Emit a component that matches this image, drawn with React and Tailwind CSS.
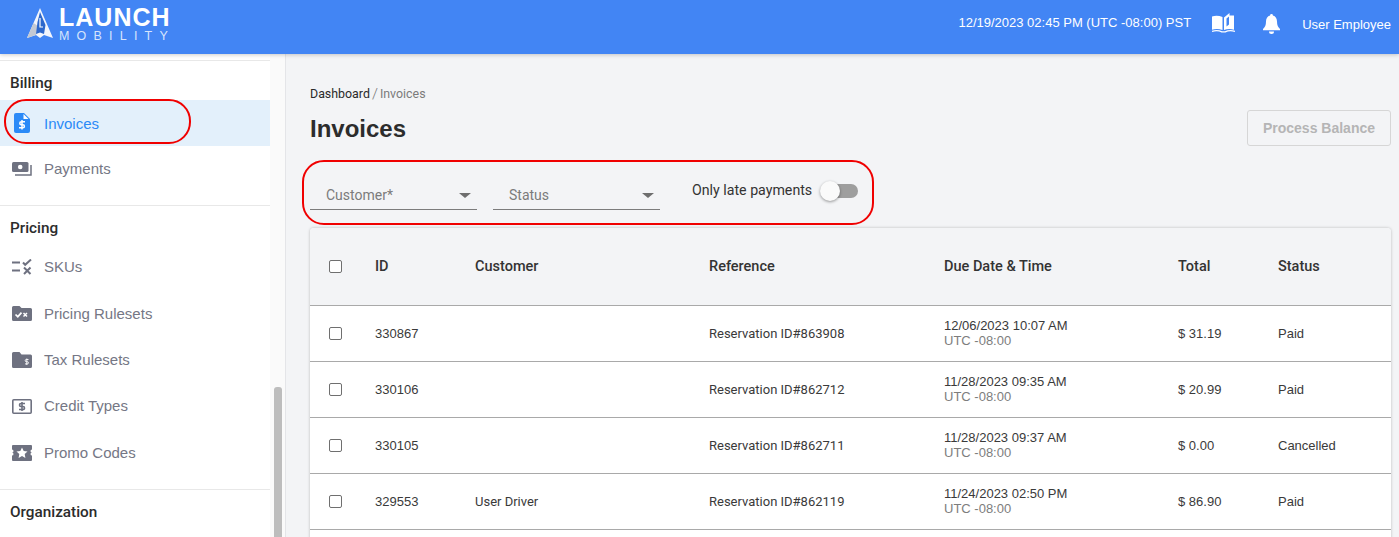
import { useState } from "react";

const rows = [
  { id: "330867", customer: "", reference: "Reservation ID#863908", due: "12/06/2023 10:07 AM", total: "$ 31.19", status: "Paid" },
  { id: "330106", customer: "", reference: "Reservation ID#862712", due: "11/28/2023 09:35 AM", total: "$ 20.99", status: "Paid" },
  { id: "330105", customer: "", reference: "Reservation ID#862711", due: "11/28/2023 09:37 AM", total: "$ 0.00", status: "Cancelled" },
  { id: "329553", customer: "User Driver", reference: "Reservation ID#862119", due: "11/24/2023 02:50 PM", total: "$ 86.90", status: "Paid" },
];

const InvoiceIcon = () => (
  <svg width="16" height="20" viewBox="0 0 16 20">
    <path d="M2 0h8l6 6v12a2 2 0 0 1-2 2H2a2 2 0 0 1-2-2V2a2 2 0 0 1 2-2z" fill="#2b8af7" />
    <path d="M9.5 1v5h5z" fill="#fff" />
    <path d="M11 8.800H7.300a1.500 1.500 0 0 0 0 3h1.600a1.500 1.500 0 0 1 0 3H5M8 7v9.500" fill="none" stroke="#fff" strokeWidth="1.500" />
  </svg>
);

const PaymentsIcon = () => (
  <svg width="20" height="14" viewBox="0 0 20 14">
    <rect x="0" y="0" width="16.500" height="10" rx="1.500" fill="#6e7180" />
    <circle cx="8.200" cy="5" r="2.300" fill="#fff" />
    <path d="M19 3v10H3" fill="none" stroke="#6e7180" strokeWidth="1.500" />
  </svg>
);

const SkuIcon = () => (
  <svg width="20" height="16" viewBox="0 0 20 16" fill="none" stroke="#6e7180" strokeWidth="2">
    <path d="M0 3.500h8M0 11.500h8" />
    <path d="M11 3.500l2.200 2.300L19 0.500" />
    <path d="M12 8.500l6.500 6.500M18.500 8.500L12 15" />
  </svg>
);

const RulesetIcon = () => (
  <svg width="20" height="15" viewBox="0 0 20 15">
    <path d="M1.500 0h6l2 2h9A1.500 1.500 0 0 1 20 3.500v10a1.500 1.500 0 0 1-1.500 1.500h-17A1.500 1.500 0 0 1 0 13.500v-12A1.500 1.500 0 0 1 1.500 0z" fill="#6e7180" />
    <path d="M3.500 8.500l2.300 2.200 3.700-4" fill="none" stroke="#fff" strokeWidth="1.700" />
    <path d="M11.500 7l3.500 3.500M15 7l-3.500 3.500" fill="none" stroke="#fff" strokeWidth="1.500" />
  </svg>
);

const TaxIcon = () => (
  <svg width="20" height="16" viewBox="0 0 20 16">
    <path d="M1.500 0h6l2 2.500h9A1.500 1.500 0 0 1 20 4v10.500a1.500 1.500 0 0 1-1.500 1.500h-17A1.500 1.500 0 0 1 0 14.500v-13A1.500 1.500 0 0 1 1.500 0z" fill="#6e7180" />
    <path d="M16.500 7.500h-2.200a1 1 0 0 0 0 2.200h1a1 1 0 0 1 0 2.200H13M14.800 6.500v6.500" fill="none" stroke="#fff" strokeWidth="0.900" />
  </svg>
);

const CreditIcon = () => (
  <svg width="20" height="15" viewBox="0 0 20 15">
    <rect x="0.800" y="0.800" width="18.400" height="13.400" rx="1" fill="none" stroke="#6e7180" strokeWidth="1.600" />
    <path d="M13 4.500H9a1.400 1.400 0 0 0 0 3h2a1.400 1.400 0 0 1 0 3H7M10 3v9" fill="none" stroke="#6e7180" strokeWidth="1.600" />
  </svg>
);

const PromoIcon = () => (
  <svg width="20" height="16" viewBox="0 0 20 16">
    <path d="M1 0h18a1 1 0 0 1 1 1v3.500a1.500 1.500 0 0 0 0 3 1.500 1.500 0 0 0 0 3V15a1 1 0 0 1-1 1H1a1 1 0 0 1-1-1v-4.500a1.500 1.500 0 0 0 0-3 1.500 1.500 0 0 0 0-3V1a1 1 0 0 1 1-1z" fill="#6e7180" />
    <path d="M10 2.500l1.700 3.500 3.800.5-2.800 2.600.7 3.800-3.400-1.900-3.400 1.900.7-3.800-2.800-2.600 3.800-.5z" fill="#fff" />
  </svg>
);

const BookIcon = () => (
  <svg width="23" height="20" viewBox="0 0 23 20">
    <path d="M0 3.500C3 2.500 7 2.500 10.500 4v13C7 15.800 3 15.800 0 16.800z" fill="#fff" />
    <path d="M12 4.500L17.500 0v2.600H22v14.200c-3.500-1-6.800-.9-10 .2z" fill="#fff" />
    <path d="M14.500 13.500V5.500L17 3.500v8z" fill="#4285f4" />
    <path d="M0 18.300c3.500-.9 7-.8 9.800.5h3.400c2.800-1.300 6.300-1.400 9.800-.5" fill="none" stroke="#fff" strokeWidth="1.300" />
  </svg>
);

const BellIcon = () => (
  <svg width="17" height="20" viewBox="0 0 17 20">
    <path d="M8.500 0a1.400 1.400 0 0 1 1.400 1.500C12.700 2.200 14 4.600 14 7.500c0 4 1 5.500 3 7.500v1.200H0V15c2-2 3-3.500 3-7.500 0-2.900 1.300-5.300 4.100-6A1.400 1.400 0 0 1 8.500 0z" fill="#fff" />
    <path d="M6 17.500h5a2.500 2.500 0 0 1-5 0z" fill="#fff" />
  </svg>
);

const Logo = () => (
  <div className="flex items-start">
    <svg width="26" height="30" viewBox="0 0 26 30" className="ml-[27px] mt-[8px]">
      <path d="M13 0L0 30l9-3 4 3 4-3 9 3z" fill="#f2f5fc" />
      <path d="M6.500 15L0 30l9-3 2-9z" fill="#c3c9d4" />
      <path d="M13 4l5.500 13-1.500 9-4-1.500L9 26l1.500-12z" fill="#2d68cc" />
      <path d="M13 10v9h3" fill="none" stroke="#fff" strokeWidth="1.200" />
    </svg>
    <div className="ml-[6px] mt-[4px] flex flex-col font-['Liberation_Sans',sans-serif] text-white">
      <span className="text-[25px] font-bold leading-[26px] tracking-[1px]">LAUNCH</span>
      <span className="-mt-[1px] text-[12.5px] leading-[14px] tracking-[7.200px] text-[#d6e4fc]">MOBILITY</span>
    </div>
  </div>
);

function SideItem({ icon, label, active, className }) {
  return (
    <div
      className={`flex h-[46.4px] items-center ${active ? "bg-[#e3f0fb] text-[#2b8af7]" : "text-[#757785]"} ${className || ""}`}
    >
      <span className="flex w-[44px] justify-center">{icon}</span>
      <span className={`text-[15px] ${active ? "pt-[3px]" : "pt-[1px]"}`}>{label}</span>
    </div>
  );
}

function Checkbox() {
  return <span className="block size-[13px] rounded-[2px] border border-[#6f6f6f] bg-white" />;
}

const gridCols = "grid grid-cols-[65px_100px_234px_235px_234px_100px_1fr] items-center";

export default function App() {
  const [late, setLate] = useState(false);

  return (
    <div className="flex h-[537px] w-full flex-col overflow-hidden bg-[#f3f4f6] font-['Liberation_Sans',sans-serif]">
      <header className="relative z-10 flex h-[54px] shrink-0 items-start justify-between bg-[#4285f4] shadow-[0_1px_4px_rgba(0,0,0,0.2)]">
        <Logo />
        <div className="flex items-start pr-[8px] text-white">
          <span className="mt-[13px] text-[13px] leading-[20px]">12/19/2023 02:45 PM (UTC -08:00) PST</span>
          <span className="ml-[21px] mt-[13px]"><BookIcon /></span>
          <span className="ml-[28px] mt-[14px]"><BellIcon /></span>
          <span className="ml-[22px] mt-[15px] text-[13px] leading-[20px]">User Employee</span>
        </div>
      </header>

      <div className="flex min-h-0 flex-1">
        <aside className="flex w-[286px] shrink-0 border-r border-[#e4e5e8] bg-[#fafafa]">
          <nav className="w-[270px] shrink-0 bg-white pt-[6px]">
            <div className="border-t border-[#e8e8e8] pt-[11px]">
              <h3 className="h-[28px] pl-[10px] font-['Roboto',sans-serif] text-[15.300px] font-medium leading-[22px] text-[#2c2c2c]">Billing</h3>
              <SideItem icon={<InvoiceIcon />} label="Invoices" active />
              <SideItem icon={<PaymentsIcon />} label="Payments" className="-mt-[1px]" />
            </div>
            <div className="mt-[13px] border-t border-[#e8e8e8] pt-[11px]">
              <h3 className="h-[16px] pl-[10px] font-['Roboto',sans-serif] text-[15.300px] font-medium leading-[22px] text-[#2c2c2c]">Pricing</h3>
              <SideItem icon={<SkuIcon />} label="SKUs" className="mt-[11px]" />
              <SideItem icon={<RulesetIcon />} label="Pricing Rulesets" />
              <SideItem icon={<TaxIcon />} label="Tax Rulesets" />
              <SideItem icon={<CreditIcon />} label="Credit Types" />
              <SideItem icon={<PromoIcon />} label="Promo Codes" />
            </div>
            <div className="mt-[13px] border-t border-[#e8e8e8] pt-[11px]">
              <h3 className="pl-[10px] font-['Roboto',sans-serif] text-[15.300px] font-medium leading-[22px] text-[#2c2c2c]">Organization</h3>
            </div>
          </nav>
          <div className="flex-1 pl-[4px] pr-[3px] pt-[333px]">
            <div className="h-[200px] rounded-[3px] bg-[#bdbdbd]" />
          </div>
        </aside>

        <main className="min-w-0 flex-1 overflow-hidden pl-[24px] pr-[8px] pt-[32px]">
          <div className="flex h-[16px] items-center font-['Roboto',sans-serif] text-[12.400px] leading-[16px]">
            <span className="text-[#2a2a2a]">Dashboard</span>
            <span className="mx-[2px] text-[15px] font-light text-[#777]">/</span>
            <span className="text-[#7b7b7b]">Invoices</span>
          </div>
          <div className="flex items-start justify-between">
            <h1 className="mt-[11px] text-[24px] font-bold leading-[32px] text-[#2c2c2c]">Invoices</h1>
            <button className="mt-[8px] h-[36px] w-[144px] rounded-[3px] border border-[#d6d6d6] text-[14px] font-bold text-[#b5b5b5]" disabled>
              Process Balance
            </button>
          </div>

          <div className="mt-[25px] flex items-start font-['Roboto',sans-serif]">
            <div className="flex h-[39px] w-[167px] items-center justify-between border-b border-[#7c7c7c] pl-[16px] pr-[6px] pt-[10px]">
              <span className="text-[14px] text-[#7b7b7b]">Customer*</span>
              <span className="h-0 w-0 border-x-[6px] border-t-[5px] border-x-transparent border-t-[#6e6e6e]" />
            </div>
            <div className="ml-[16px] flex h-[39px] w-[167px] items-center justify-between border-b border-[#7c7c7c] pl-[16px] pr-[6px] pt-[10px]">
              <span className="text-[14px] text-[#7b7b7b]">Status</span>
              <span className="h-0 w-0 border-x-[6px] border-t-[5px] border-x-transparent border-t-[#6e6e6e]" />
            </div>
            <div className="ml-[32px] flex items-center pt-[9px]">
              <span className="text-[14.200px] leading-[20px] text-[#333]">Only late payments</span>
              <button
                className="relative ml-[10px] mt-[1px] h-[14px] w-[36px] rounded-full bg-[#9e9e9e]"
                onClick={() => setLate(!late)}
              >
                <span className="absolute -left-[2px] -top-[3px] size-[20px] rounded-full bg-[#fafafa] shadow-[0_1px_3px_rgba(0,0,0,0.4)]" />
              </button>
            </div>
          </div>

          <div className="mt-[18px] rounded-t-[4px] bg-white shadow-[0_0_3px_rgba(0,0,0,0.25)]">
            <div className={`${gridCols} h-[78px] rounded-t-[4px] border-b border-[#a9a9a9] bg-[#f3f4f6] font-['Roboto',sans-serif] text-[14.500px] font-medium text-[#333]`}>
              <span className="pl-[19px]"><Checkbox /></span>
              <span>ID</span>
              <span>Customer</span>
              <span>Reference</span>
              <span>Due Date &amp; Time</span>
              <span>Total</span>
              <span>Status</span>
            </div>
            {rows.map((row) => (
              <div key={row.id} className={`${gridCols} h-[56px] border-b border-[#a9a9a9] text-[13px] text-[#3a3a3a]`}>
                <span className="pl-[19px]"><Checkbox /></span>
                <span>{row.id}</span>
                <span className="font-['Roboto',sans-serif]">{row.customer}</span>
                <span className="font-['Roboto',sans-serif]">{row.reference}</span>
                <span className="pb-[2px] leading-[15px]">
                  <span className="block">{row.due}</span>
                  <span className="block text-[#7d7d7d]">UTC -08:00</span>
                </span>
                <span>{row.total}</span>
                <span>{row.status}</span>
              </div>
            ))}
            <div className="h-[56px]" />
          </div>
        </main>
      </div>

      <div className="pointer-events-none absolute left-[4px] top-[99px] z-20 h-[45px] w-[187px] rounded-[22px] border-[2px] border-[#f00000]" />
      <div className="pointer-events-none absolute left-[302px] top-[160px] z-20 h-[65px] w-[572px] rounded-[22px] border-[2px] border-[#f00000]" />
    </div>
  );
}
